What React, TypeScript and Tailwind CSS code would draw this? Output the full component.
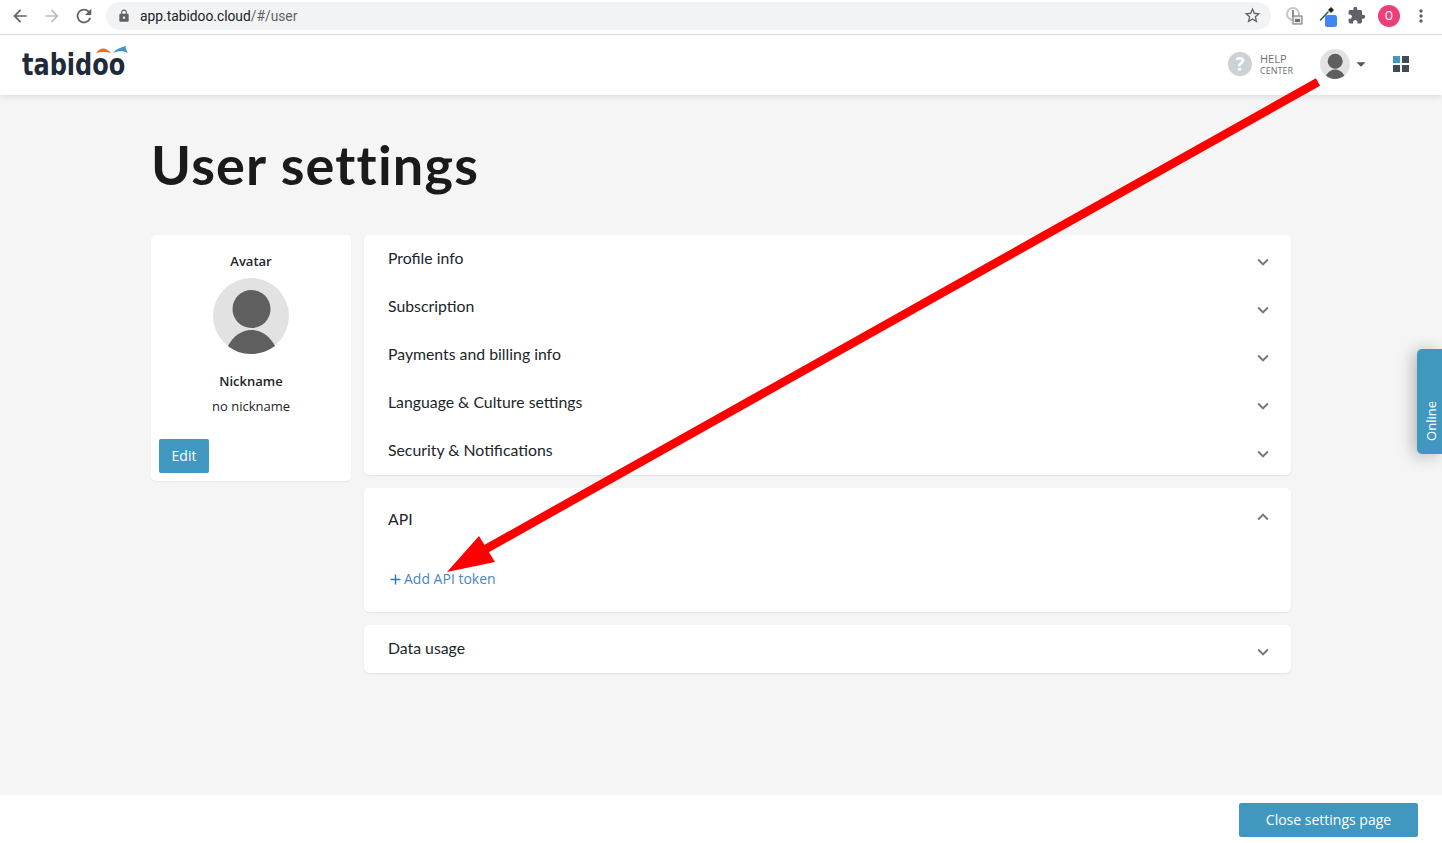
import { MdArrowBack, MdArrowForward, MdRefresh, MdLock, MdStarBorder, MdExtension, MdMoreVert, MdKeyboardArrowDown, MdKeyboardArrowUp, MdArrowDropDown, MdAdd } from "react-icons/md";

const raleway = { fontFamily: "Lato, sans-serif" };

function PersonAvatar({ size }: { size: number }) {
    return (
        <svg width={size} height={size} viewBox="0 0 76 76">
            <circle cx="38" cy="38" r="38" fill="#e2e2e2" />
            <circle cx="38.500" cy="31" r="19" fill="#5f5f5f" />
            <path d="M15 68 C20 58 29 52 38.500 52 C48 52 57 58 62 68 C55 73 47 76 38 76 C29 76 21 73 15 68 Z" fill="#5f5f5f" />
        </svg>
    );
}

function AccordionRow({ title }: { title: string }) {
    return (
        <div className="flex h-12 items-start justify-between pl-6 pr-[17px] pt-[11px]">
            <span className="text-[15.800px] leading-[24px] text-[#212529]" style={raleway}>{title}</span>
            <MdKeyboardArrowDown className="mt-[5px] text-[22px] text-[#777]" />
        </div>
    );
}

export default function App() {
    return (
        <div className="relative flex h-[843px] w-full flex-col overflow-hidden bg-white" style={{ fontFamily: "'Open Sans', sans-serif" }}>
            {/* browser bar */}
            <div className="flex h-[35px] items-center border-b border-[#dadce0] bg-white pb-[3px]">
                <div className="flex w-[106px] items-center pl-[10px]">
                    <MdArrowBack className="text-[20px] text-[#5f6368]" />
                    <MdArrowForward className="ml-[12px] text-[20px] text-[#bcbfc3]" />
                    <MdRefresh className="ml-[11px] text-[22px] text-[#5f6368]" />
                </div>
                <div className="flex h-[28px] w-[1165px] items-center rounded-full bg-[#f1f3f4] pl-[11px] pr-[9px]">
                    <MdLock className="text-[14px] text-[#5f6368]" />
                    <span className="ml-[9px] mt-[1px] flex-1 text-[13.800px] text-[#202124]" style={{ fontFamily: "Roboto, sans-serif" }}>
                        app.tabidoo.cloud<span className="text-[#5f6368]">/#/user</span>
                    </span>
                    <MdStarBorder className="text-[19px] text-[#5f6368]" />
                </div>
                <div className="relative ml-[14px] h-[18px] w-[18px]">
                    <svg width="18" height="18" viewBox="0 0 18 18">
                        <circle cx="8" cy="7" r="6" fill="none" stroke="#c8c8c8" strokeWidth="2" />
                        <rect x="7" y="3" width="2" height="7" fill="#909090" />
                        <rect x="8" y="9" width="9" height="8" fill="#e8e8e8" stroke="#707070" />
                        <rect x="10" y="12" width="5" height="3" fill="#707070" />
                    </svg>
                </div>
                <div className="relative ml-[15px] h-[24px] w-[24px]">
                    <svg width="24" height="24" viewBox="0 0 24 24">
                        <path d="M2.500 16 L10 8" stroke="#2f5a3e" strokeWidth="1.500" strokeLinecap="round" />
                        <path d="M10 6 L13 3 L16 6 L13 9 Z" fill="#222" />
                        <rect x="7" y="11" width="12" height="12" rx="2.500" fill="#4285f4" />
                    </svg>
                </div>
                <MdExtension className="ml-[5px] text-[19px] text-[#5f6368]" />
                <div className="ml-[12px] flex h-[22px] w-[22px] items-center justify-center rounded-full bg-[#ec407a] text-[12px] text-white" style={{ fontFamily: "Roboto, sans-serif" }}>
                    O
                </div>
                <MdMoreVert className="ml-[11px] text-[20px] text-[#5f6368]" />
            </div>

            {/* app header */}
            <div className="relative z-10 flex h-[60px] items-center bg-white shadow-[0_2px_6px_rgba(0,0,0,0.1)]">
                <div className="relative ml-[22px]">
                    <span className="block text-[30px] font-bold leading-[36px] text-[#1f2a3a]" style={{ fontFamily: "'DejaVu Sans', sans-serif", transform: "scaleX(0.8)", transformOrigin: "left" }}>
                        tabidoo
                    </span>
                    <svg className="absolute left-[72px] top-[-3px]" width="36" height="14" viewBox="0 0 36 14">
                        <path d="M2 9 C6 3 12 3 17 9 C12 7.500 7 7.500 2 9 Z" fill="#e8702a" />
                        <path d="M19 9 C22 5 27 3 32 2 C31 4 33 7 34 9 C29 6.500 24 7 19 9 Z" fill="#3f97c2" />
                    </svg>
                </div>
                <div className="ml-auto flex items-center pb-[2px] pr-[33px]">
                    <div className="flex h-[24px] w-[24px] items-center justify-center rounded-full bg-[#ccd1d6] text-[19px] font-bold text-white">?</div>
                    <div className="ml-[8px] w-[60px] text-[#6b6f73]">
                        <div className="text-[11px] leading-[12px]">HELP</div>
                        <div className="text-[9px] leading-[11px]">CENTER</div>
                    </div>
                    <PersonAvatar size={30} />
                    <MdArrowDropDown className="ml-[0px] text-[22px] text-[#555]" />
                    <div className="ml-[21px] grid grid-cols-2 gap-[2px]">
                        <div className="h-[7px] w-[7px] bg-[#4097bf]" />
                        <div className="h-[7px] w-[7px] bg-[#3f4b57]" />
                        <div className="h-[7px] w-[7px] bg-[#3f4b57]" />
                        <div className="h-[7px] w-[7px] bg-[#3f4b57]" />
                    </div>
                </div>
            </div>

            {/* content */}
            <div className="h-[700px] bg-[#f5f5f5] pl-[151px]">
                <h1 className="pt-[34px] text-[54px] font-bold leading-[72px] tracking-[1.2px] text-[#1a1a1a]" style={raleway}>User settings</h1>
                <div className="mt-[34px] flex items-start gap-[13px]">
                    <div className="flex h-[246px] w-[200px] flex-col items-center rounded-[5px] bg-white pt-[16px] shadow-[0_1px_2px_rgba(0,0,0,0.06)]">
                        <div className="text-[13px] font-semibold leading-[20px] text-[#212529]">Avatar</div>
                        <div className="mt-[7px]"><PersonAvatar size={76} /></div>
                        <div className="mt-[17px] text-[13px] font-semibold leading-[20px] text-[#212529]">Nickname</div>
                        <div className="mt-[5px] text-[13px] leading-[20px] text-[#212529]">no nickname</div>
                        <div className="mt-[23px] flex w-full pl-[8px]">
                            <button className="flex h-[34px] w-[50px] items-center justify-center rounded-[2px] bg-[#4097bf] pb-[2px] text-[14px] text-white">Edit</button>
                        </div>
                    </div>
                    <div className="flex w-[927px] flex-col gap-[13px]">
                        <div className="rounded-[5px] bg-white shadow-[0_1px_2px_rgba(0,0,0,0.08)]">
                            <AccordionRow title="Profile info" />
                            <AccordionRow title="Subscription" />
                            <AccordionRow title="Payments and billing info" />
                            <AccordionRow title="Language & Culture settings" />
                            <AccordionRow title="Security & Notifications" />
                        </div>
                        <div className="h-[124px] rounded-[5px] bg-white shadow-[0_1px_2px_rgba(0,0,0,0.08)]">
                            <div className="flex items-start justify-between pl-6 pr-[17px] pt-[19px]">
                                <span className="text-[15.800px] leading-[24px] text-[#212529]" style={raleway}>API</span>
                                <MdKeyboardArrowUp className="mt-[-1px] text-[22px] text-[#777]" />
                            </div>
                            <div className="mt-[37px] flex items-center pl-[23px] text-[14px] leading-[22px] text-[#4a86c0]">
                                <MdAdd className="text-[17px] text-[#2f78b7]" />
                                <span className="ml-[0px]">Add API token</span>
                            </div>
                        </div>
                        <div className="rounded-[5px] bg-white shadow-[0_1px_2px_rgba(0,0,0,0.08)]">
                            <AccordionRow title="Data usage" />
                        </div>
                    </div>
                </div>
            </div>

            {/* footer */}
            <div className="flex flex-1 items-start justify-end bg-white pr-[24px] pt-[8px]">
                <button className="flex h-[34px] w-[179px] items-center justify-center rounded-[2px] bg-[#4097bf] pb-[2px] text-[14px] text-white">Close settings page</button>
            </div>

            {/* online tab */}
            <div className="absolute right-0 top-[349px] flex h-[105px] w-[25px] items-end justify-center rounded-l-[5px] bg-[#4097bf] pb-[13px] pl-[3px] shadow-[-4px_2px_16px_rgba(0,0,0,0.25)]">
                <span className="text-[13px] leading-[22px] text-white [writing-mode:vertical-rl] rotate-180">Online</span>
            </div>

            {/* annotation arrow */}
            <svg className="pointer-events-none absolute left-0 top-0 z-20" width="1442" height="843" viewBox="0 0 1442 843">
                <line x1="1318" y1="82" x2="484" y2="550" stroke="#ff0000" strokeWidth="8.500" />
                <polygon points="447,572 479,536 495,562" fill="#ff0000" />
            </svg>
        </div>
    );
}
